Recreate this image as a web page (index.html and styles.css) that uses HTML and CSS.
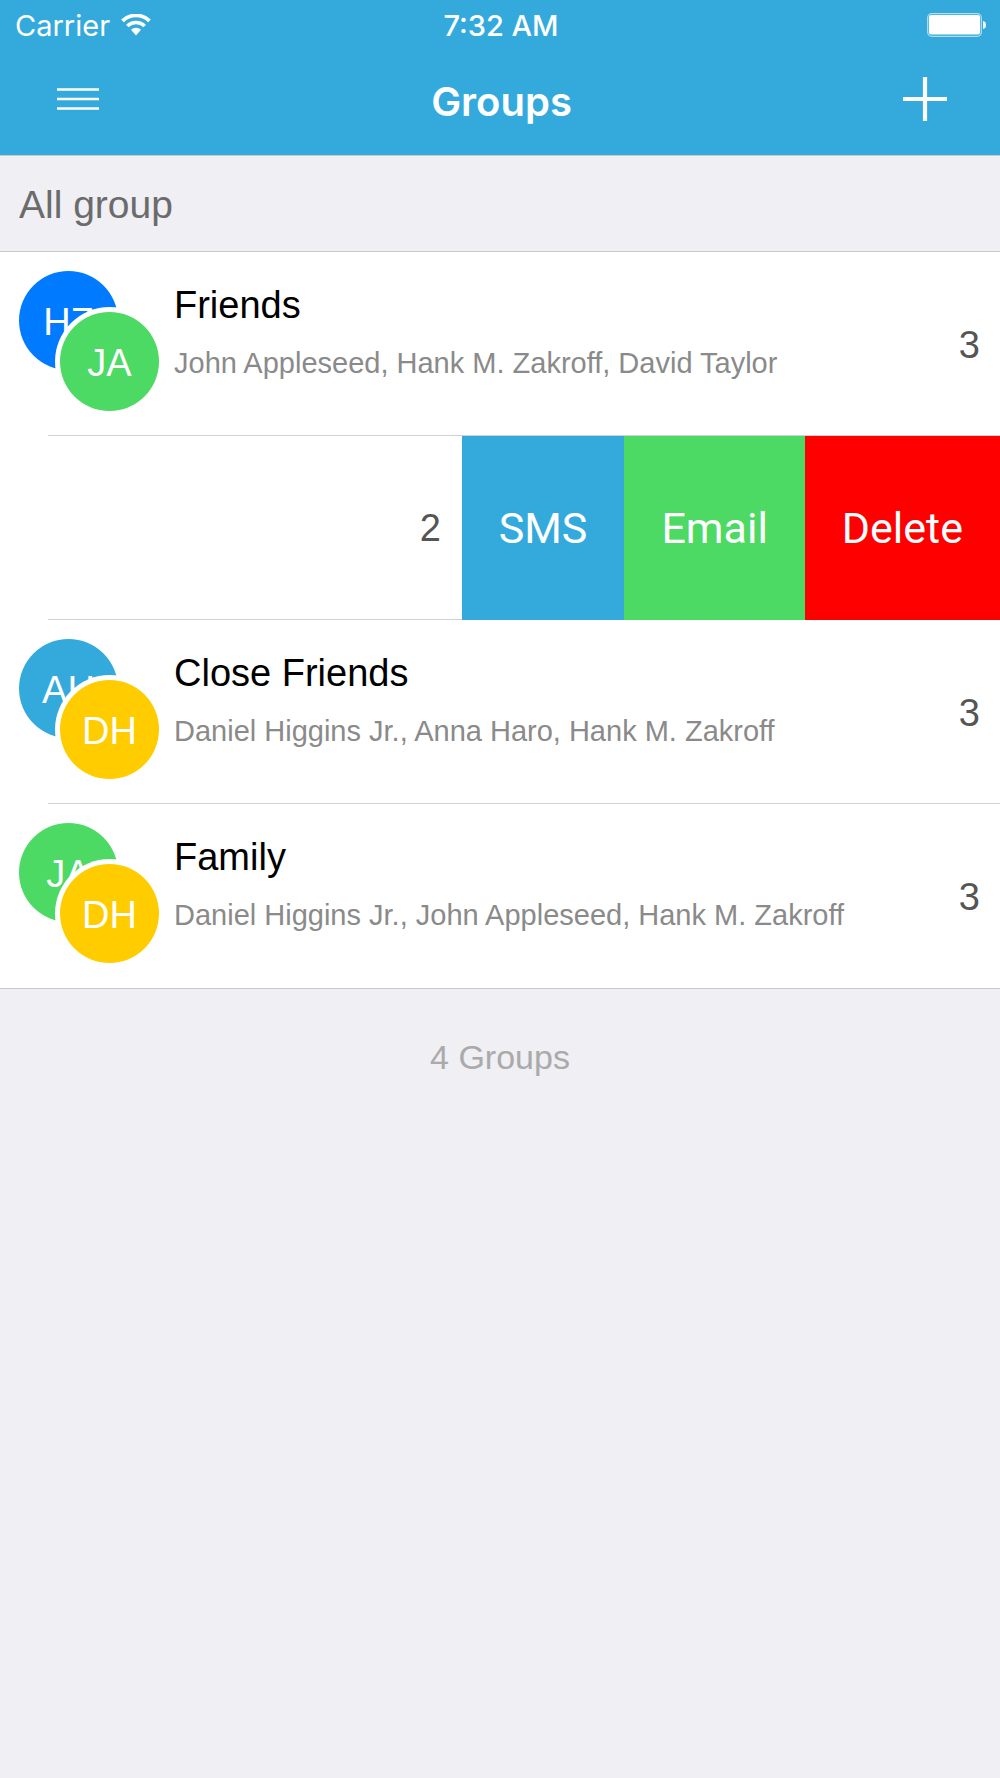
FILE: index.html
```
<!DOCTYPE html>
<html lang="en">
<head>
    <meta charset="UTF-8">
    <meta name="viewport" content="width=device-width, initial-scale=1">
    <title>Groups</title>
    <link rel="stylesheet" href="styles.css">
</head>
<body>
    <header class="top">
        <!-- Status Bar -->
        <div class="status-bar">
            <div class="carrier">
                <span>Carrier</span>
                <svg width="30" height="22" viewBox="0 0 30 22" fill="none" stroke="#fff" stroke-width="4" aria-hidden="true">
                    <path d="M1.5 6.8A19.5 19.5 0 0 1 28.5 6.8" stroke-width="3.8"/>
                    <path d="M6.3 12A12.4 12.4 0 0 1 23.7 12" stroke-width="3.6"/>
                    <path d="M10 15.8a7 7 0 0 1 10 0L15 21.6z" fill="#fff" stroke="none"/>
                </svg>
            </div>
            <div class="time">7:32 AM</div>
            <svg class="battery" width="60" height="24" viewBox="0 0 60 24" aria-hidden="true">
                <rect x="0.7" y="0.7" width="53.6" height="22.6" rx="4" fill="none" stroke="#fff" stroke-opacity="0.6" stroke-width="1.3"/>
                <rect x="2" y="2" width="51" height="19.6" rx="2" fill="#fff"/>
                <path d="M56 8c4 0.4 4 7.6 0 8z" fill="#fff"/>
            </svg>
        </div>

        <!-- Navigation -->
        <nav class="nav-bar">
            <button class="nav-btn" type="button" aria-label="Menu">
                <svg width="42" height="24" viewBox="0 0 42 24" stroke="#fff" stroke-width="2.4">
                    <path d="M0 2.5h42M0 12h42M0 21.5h42"/>
                </svg>
            </button>
            <h1>Groups</h1>
            <button class="nav-btn" type="button" aria-label="Add group">
                <svg width="44" height="44" viewBox="0 0 44 44" stroke="#fff" stroke-width="4.2">
                    <path d="M22 0v44M0 22h44"/>
                </svg>
            </button>
        </nav>
    </header>

    <main>
        <h2 class="section-title">All group</h2>

        <ul class="groups">
            <li class="group">
                <div class="avatars">
                    <span class="avatar blue">HZ</span>
                    <span class="avatar front green">JA</span>
                </div>
                <div class="info">
                    <h3>Friends</h3>
                    <p>John Appleseed, Hank M. Zakroff, David Taylor</p>
                </div>
                <span class="count">3</span>
            </li>

            <!-- Swiped row -->
            <li class="group swiped">
                <span class="count">2</span>
                <div class="actions">
                    <button class="sky" type="button">SMS</button>
                    <button class="green" type="button">Email</button>
                    <button class="red" type="button">Delete</button>
                </div>
            </li>

            <li class="group">
                <div class="avatars">
                    <span class="avatar sky">AH</span>
                    <span class="avatar front yellow">DH</span>
                </div>
                <div class="info">
                    <h3>Close Friends</h3>
                    <p>Daniel Higgins Jr., Anna Haro, Hank M. Zakroff</p>
                </div>
                <span class="count">3</span>
            </li>

            <li class="group">
                <div class="avatars">
                    <span class="avatar green">JA</span>
                    <span class="avatar front yellow">DH</span>
                </div>
                <div class="info">
                    <h3>Family</h3>
                    <p>Daniel Higgins Jr., John Appleseed, Hank M. Zakroff</p>
                </div>
                <span class="count">3</span>
            </li>
        </ul>

        <p class="total">4 Groups</p>
    </main>
</body>
</html>
```
FILE: styles.css
```
* {
    box-sizing: border-box;
    margin: 0;
    padding: 0;
}

body {
    min-height: 100vh;
    background-color: #efeff4;
    font-family: "Liberation Sans", Arial, sans-serif;
}

button {
    border: none;
    color: white;
    cursor: pointer;
}

/* Header */
.top {
    background-color: #34aadc;
    color: white;
    font-family: Inter, sans-serif;
    border-bottom: 1px solid #c8c7cc;
}

.status-bar {
    display: grid;
    grid-template-columns: 1fr auto 1fr;
    align-items: center;
    height: 50px;
    padding: 0 13px 0 15px;
    font-size: 29px;
}

.carrier {
    display: flex;
    align-items: center;
    gap: 11px;
}

.time {
    font-weight: 500;
}

.battery {
    justify-self: end;
}

.nav-bar {
    display: flex;
    justify-content: space-between;
    align-items: center;
    height: 105px;
    padding: 0 33px 7px 36px;
}

.nav-btn {
    display: flex;
    justify-content: center;
    align-items: center;
    width: 84px;
    height: 84px;
    background: none;
}

.nav-bar h1 {
    font-size: 40px;
    font-weight: 600;
    line-height: 48px;
    padding-top: 6px;
}

/* Group list */
.section-title {
    padding: 27px 19px 25px;
    font-size: 39px;
    font-weight: 400;
    line-height: 43px;
    color: #6b6b6b;
    border-bottom: 1px solid #c8c7cc;
}

.groups {
    list-style: none;
    background-color: white;
    border-bottom: 1px solid #c8c7cc;
}

.group {
    position: relative;
    display: flex;
    height: 184px;
    padding: 1px 20px 0 19px;
}

/* inset separator */
.group:not(:last-child)::before {
    content: "";
    position: absolute;
    left: 48px;
    right: 0;
    bottom: 0;
    height: 1px;
    background-color: #d0d0d3;
}

.avatars {
    position: relative;
    flex: none;
    width: 155px;
    padding-top: 18px;
}

.avatar {
    display: block;
    width: 99px;
    height: 99px;
    border-radius: 50%;
    color: white;
    font-size: 38px;
    line-height: 103px;
    text-align: center;
}

.avatar.front {
    position: absolute;
    top: 59px;
    left: 41px;
    box-shadow: 0 0 0 5px white;
}

.info {
    flex: 1;
    min-width: 0;
    padding-top: 30px;
}

.info h3 {
    font-size: 38px;
    font-weight: 400;
    line-height: 44px;
    margin-bottom: 18px;
    color: black;
}

.info p {
    font-size: 29px;
    line-height: 36px;
    color: #8a8a8a;
    white-space: nowrap;
    overflow: hidden;
    text-overflow: ellipsis;
}

.count {
    align-self: center;
    font-size: 38px;
    line-height: 44px;
    color: #555;
}

.swiped {
    justify-content: flex-end;
    gap: 21px;
    padding: 0;
}

.actions {
    position: relative;
    display: flex;
}

.actions button {
    padding: 0 37px;
    font-family: Roboto, sans-serif;
    font-size: 43px;
}

.blue { background-color: #007aff; }
.sky { background-color: #34aadc; }
.green { background-color: #4cd964; }
.yellow { background-color: #ffcc00; }
.red { background-color: #ff0000; }

.total {
    padding-top: 48px;
    font-size: 34px;
    line-height: 40px;
    text-align: center;
    color: #aaa;
}
```
